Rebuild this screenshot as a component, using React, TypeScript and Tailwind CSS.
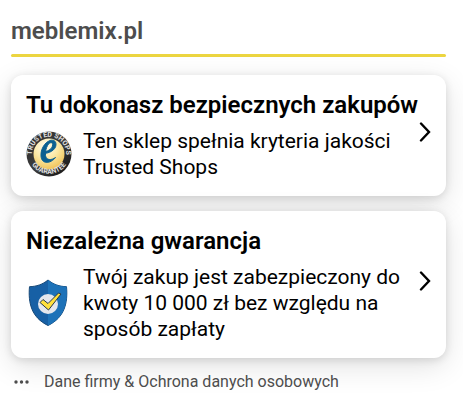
import type { ReactNode } from 'react'

function TrustedShopsLogo() {
  return (
    <svg viewBox="0 0 46 46" className="w-[46px] h-[46px]" aria-hidden="true">
      <defs>
        <radialGradient id="gold" cx="40%" cy="25%" r="80%">
          <stop offset="0" stopColor="#fffdf0" />
          <stop offset="0.5" stopColor="#fbe9a6" />
          <stop offset="1" stopColor="#eebf50" />
        </radialGradient>
        <linearGradient id="ring" x1="0" y1="0" x2="1" y2="1">
          <stop offset="0" stopColor="#2b2b2b" />
          <stop offset="0.5" stopColor="#3c3c3c" />
          <stop offset="1" stopColor="#111111" />
        </linearGradient>
        <path id="top" d="M6.4 27.5A17.2 17.2 0 1 1 39.6 27.5" />
        <path id="bottom" d="M2.4 25.5A20.9 20.9 0 0 0 43.6 25.5" />
      </defs>
      <circle cx="23" cy="23" r="22.5" fill="url(#ring)" />
      <circle cx="23" cy="23" r="15.5" fill="url(#gold)" />
      <g className="font-['Roboto',sans-serif] font-bold" fill="#e2e2e2" fontSize="7">
        <text textAnchor="middle">
          <textPath href="#top" startOffset="50%">
            TRUSTED SHOPS
          </textPath>
        </text>
        <text textAnchor="middle">
          <textPath href="#bottom" startOffset="50%">
            GUARANTEE
          </textPath>
        </text>
      </g>
      <path
        d="M15.5 22.5C23 23 30 19 30 13.5C30 9.5 27 8.5 24 9.5C18.5 11.5 14.5 18.5 15 25C15.5 33.5 24.5 33 29.5 26.5C25.5 29.5 20 29.5 19.5 24.5C19 19 21.5 12.5 24.5 11.8C26.5 11.3 27 13 26.5 15C25.5 18.5 21 20.8 16.5 21Z"
        fill="#0b6191"
        stroke="#0b6191"
        strokeWidth="1"
        strokeLinejoin="round"
      />
    </svg>
  )
}

function ShieldLogo() {
  return (
    <svg viewBox="0 0 40 48" className="ml-0.5 w-[40px] h-[48px]" aria-hidden="true">
      <path
        d="M20 1C14.5 5.5 8.5 7.5 1.5 7.7C0 24 3.5 38.5 20 46.5C36.5 38.5 40 24 38.5 7.7C31.5 7.5 25.5 5.5 20 1Z"
        fill="#1760a5"
        stroke="#194a78"
        strokeWidth="1"
      />
      <path d="M20 1C25.5 5.5 31.5 7.5 38.5 7.7C40 24 36.5 38.5 20 46.5Z" fill="#1d72b8" />
      <circle cx="20" cy="25" r="10" fill="#e4e7ed" />
      <path
        d="M12 23.5L15 20.5L20 24.5L30.5 14L33 15L20.5 31Z"
        fill="#ffe03b"
        stroke="#25374b"
        strokeWidth="1"
        strokeLinejoin="round"
      />
    </svg>
  )
}

function Chevron() {
  return (
    <svg viewBox="0 0 12 20" className="mb-2 w-3 h-5" fill="none" stroke="#000" strokeWidth="2.4" strokeLinecap="round" aria-hidden="true">
      <path d="M2 1.5L10 10L2 18.5" />
    </svg>
  )
}

type CardProps = {
  title: string
  icon: ReactNode
  children: ReactNode
}

function Card({ title, icon, children }: CardProps) {
  return (
    <button className="flex w-full items-center rounded-xl bg-white px-[15px] py-4 text-left text-black shadow-[0_8px_30px_rgba(0,0,0,0.12),0_2px_8px_rgba(0,0,0,0.12)]">
      <span className="min-w-0 flex-1">
        <span className="block whitespace-nowrap text-[24px] leading-7 font-semibold">{title}</span>
        <span className="mt-[9px] flex items-center">
          <span className="flex w-[57px] shrink-0">{icon}</span>
          <span className="text-[21px] leading-[26px]">{children}</span>
        </span>
      </span>
      <Chevron />
    </button>
  )
}

export default function App() {
  return (
    <main className="bg-white pt-[17px] pb-3 pl-[11px] pr-[17px] font-['Roboto',sans-serif]">
      <h1 className="text-[24px] leading-7 font-semibold text-[#4d4d4d]">meblemix.pl</h1>
      <hr className="mt-[9px] h-[3px] rounded-full border-0 bg-[#ecd540]" />
      <div className="mt-[18px] flex flex-col gap-[15px]">
        <Card title="Tu dokonasz bezpiecznych zakupów" icon={<TrustedShopsLogo />}>
          Ten sklep spełnia kryteria jakości Trusted Shops
        </Card>
        <Card title="Niezależna gwarancja" icon={<ShieldLogo />}>
          Twój zakup jest zabezpieczony do kwoty 10 000 zł bez względu na sposób zapłaty
        </Card>
      </div>
      <a href="#" className="mt-3 flex items-center pl-[3px] text-[16px] leading-6 text-[#4d4d4d]">
        <svg viewBox="0 0 16 4" className="mr-[14px] h-1 w-4" fill="currentColor" aria-hidden="true">
          <circle cx="2" cy="2" r="1.7" />
          <circle cx="7.5" cy="2" r="1.7" />
          <circle cx="13" cy="2" r="1.7" />
        </svg>
        Dane firmy &amp; Ochrona danych osobowych
      </a>
    </main>
  )
}
